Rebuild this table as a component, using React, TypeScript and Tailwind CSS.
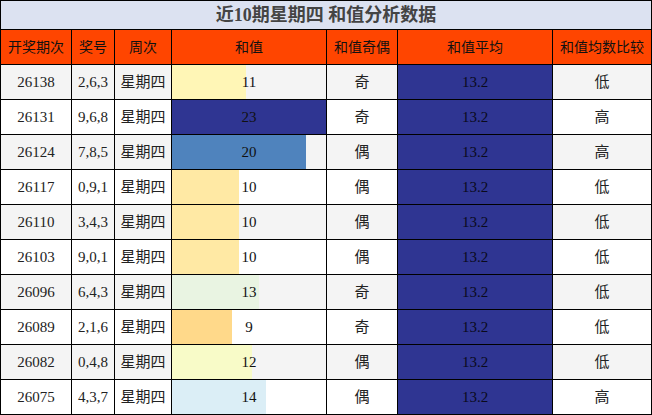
const rows = [
  { issue: "26138", nums: "2,6,3", sum: 11, oe: "奇", cmp: "低" },
  { issue: "26131", nums: "9,6,8", sum: 23, oe: "奇", cmp: "高" },
  { issue: "26124", nums: "7,8,5", sum: 20, oe: "偶", cmp: "高" },
  { issue: "26117", nums: "0,9,1", sum: 10, oe: "偶", cmp: "低" },
  { issue: "26110", nums: "3,4,3", sum: 10, oe: "偶", cmp: "低" },
  { issue: "26103", nums: "9,0,1", sum: 10, oe: "偶", cmp: "低" },
  { issue: "26096", nums: "6,4,3", sum: 13, oe: "奇", cmp: "低" },
  { issue: "26089", nums: "2,1,6", sum: 9, oe: "奇", cmp: "低" },
  { issue: "26082", nums: "0,4,8", sum: 12, oe: "偶", cmp: "低" },
  { issue: "26075", nums: "4,3,7", sum: 14, oe: "偶", cmp: "高" },
];

const barColor: Record<number, string> = {
  9: "#ffd98a",
  10: "#ffe9a4",
  11: "#fff6b6",
  12: "#f8fbc8",
  13: "#e9f4e2",
  14: "#dbeef6",
  20: "#4f83bd",
  23: "#2f3592",
};

const maxSum = 23;
const font = { fontFamily: '"Liberation Serif", "Noto Sans CJK SC", serif' };

export default function App() {
  const th = "border border-black text-[14px] font-normal text-[#111] p-0";
  const td = "border border-black text-center text-[15px] text-[#222] p-0";

  return (
    <div className="w-[652px] h-[415px] bg-white overflow-hidden" style={font}>
      <table className="border-collapse table-fixed w-[651px]">
        <colgroup>
          <col className="w-[71px]" />
          <col className="w-[43px]" />
          <col className="w-[57px]" />
          <col className="w-[155px]" />
          <col className="w-[71px]" />
          <col className="w-[155px]" />
          <col className="w-[99px]" />
        </colgroup>
        <thead>
          <tr className="h-[29px] bg-[#dce2f1]">
            <th colSpan={7} className="border border-black p-0 text-[18px] font-bold text-[#444] leading-none">
              近10期星期四 和值分析数据
            </th>
          </tr>
          <tr className="h-[35px] bg-[#ff4500]">
            <th className={th}>开奖期次</th>
            <th className={th}>奖号</th>
            <th className={th}>周次</th>
            <th className={th}>和值</th>
            <th className={th}>和值奇偶</th>
            <th className={th}>和值平均</th>
            <th className={th}>和值均数比较</th>
          </tr>
        </thead>
        <tbody>
          {rows.map((r, i) => (
            <tr key={r.issue} className={`h-[35px] ${i % 2 === 0 ? "bg-[#f4f4f4]" : "bg-white"}`}>
              <td className={td}>{r.issue}</td>
              <td className={td}>{r.nums}</td>
              <td className={`${td} text-[14px]`}>星期四</td>
              <td className={`${td} relative`}>
                <div
                  className="absolute left-0 top-0 bottom-0"
                  style={{ width: `${(r.sum / maxSum) * 100}%`, background: barColor[r.sum] }}
                />
                <span className="relative text-[#111]">{r.sum}</span>
              </td>
              <td className={`${td} text-[14px]`}>{r.oe}</td>
              <td className="border border-black text-center text-[15px] text-[#0a0a1a] p-0 bg-[#2f3592]">13.2</td>
              <td className={`${td} text-[14px]`}>{r.cmp}</td>
            </tr>
          ))}
        </tbody>
      </table>
    </div>
  );
}
